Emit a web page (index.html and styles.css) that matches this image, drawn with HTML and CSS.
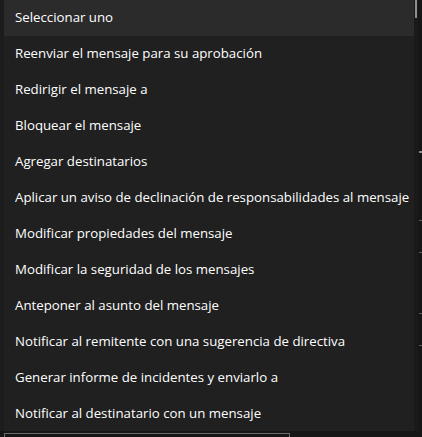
FILE: index.html
```html
<!DOCTYPE html>
<html lang="es">
<head>
<meta charset="utf-8">
<link rel="stylesheet" href="styles.css">
</head>
<body>
<div class="page">
  <div class="backdrop">
    <div class="marks">
      <span class="mark mark-t"></span>
      <span class="mark mark-1"></span>
      <span class="mark mark-2"></span>
      <span class="mark mark-3"></span>
      <span class="mark mark-4"></span>
    </div>
    <div class="input-under"></div>
  </div>
  <ul class="listbox" role="listbox">
    <li class="option selected">Seleccionar uno</li>
    <li class="option">Reenviar el mensaje para su aprobación</li>
    <li class="option">Redirigir el mensaje a</li>
    <li class="option">Bloquear el mensaje</li>
    <li class="option">Agregar destinatarios</li>
    <li class="option">Aplicar un aviso de declinación de responsabilidades al mensaje</li>
    <li class="option">Modificar propiedades del mensaje</li>
    <li class="option">Modificar la seguridad de los mensajes</li>
    <li class="option">Anteponer al asunto del mensaje</li>
    <li class="option">Notificar al remitente con una sugerencia de directiva</li>
    <li class="option">Generar informe de incidentes y enviarlo a</li>
    <li class="option">Notificar al destinatario con un mensaje</li>
  </ul>
  <div class="scrollbar"><div class="thumb"></div></div>
</div>
</body>
</html>
```
FILE: styles.css
```css
html, body {
  margin: 0;
  padding: 0;
}
body {
  background: #161616;
  font-family: "Open Sans", "Noto Sans", sans-serif;
}
.page {
  position: relative;
  width: 422px;
  height: 437px;
  overflow: hidden;
}
.backdrop {
  width: 422px;
  height: 437px;
  background: #161616;
  display: flex;
  flex-direction: column;
  justify-content: flex-end;
}
.input-under {
  margin-left: 4px;
  width: 284px;
  height: 3px;
  border-top: 1px solid #6b6b6b;
  border-left: 1px solid #6b6b6b;
  border-right: 1px solid #6b6b6b;
}
.marks {
  position: absolute;
  left: 418px;
  top: 0;
  width: 4px;
  height: 437px;
}
.mark {
  position: absolute;
  left: 1px;
  width: 3px;
  height: 1px;
  background: #5a5a5a;
}
.mark-t { top: 151px; height: 2px; background: #8a8a8a; }
.mark-1 { top: 220px; }
.mark-2 { top: 252px; }
.mark-3 { top: 313px; }
.mark-4 { top: 345px; }
.listbox {
  position: absolute;
  left: 0;
  top: 0;
  width: 414px;
  height: 431px;
  margin: 0;
  padding: 0;
  list-style: none;
  background: #202020;
  border-left: 4px solid #1c1c1c;
  overflow: hidden;
}
.option {
  height: 36px;
  line-height: 35px;
  padding-left: 11px;
  font-size: 13.25px;
  color: #ffffff;
  white-space: nowrap;
}
.option.selected {
  background: #2b2b2b;
}
.scrollbar {
  position: absolute;
  left: 414px;
  top: 0;
  width: 4px;
  height: 431px;
  background: #1a1a1a;
}
.thumb {
  width: 2px;
  margin-left: 1px;
  height: 18px;
  background: #8f8f8f;
}
```
